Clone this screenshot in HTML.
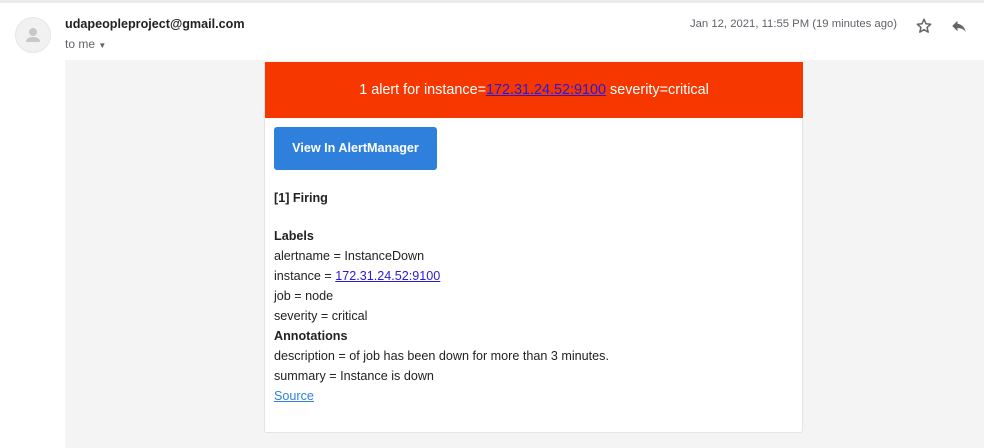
<!DOCTYPE html>
<html><head><style>
body{margin:0;width:984px;height:448px;background:#fff;font-family:"Liberation Sans",Arial,sans-serif;position:relative;overflow:hidden}
.topline{position:absolute;left:0;top:0;width:984px;height:3px;background:#ececec}
.av{position:absolute;left:15px;top:17px;width:36px;height:36px;border-radius:50%;background:#f1f1f1;border:1px solid #e6e6e6;box-sizing:border-box}
.from{position:absolute;left:65px;top:17px;font-size:12.6px;font-weight:bold;color:#222}
.tome{position:absolute;left:65px;top:37px;font-size:12px;color:#5f6368}
.date{position:absolute;left:690px;top:18px;font-size:11.3px;color:#5f6368}
.gray{position:absolute;left:65px;top:60px;width:919px;height:388px;background:#f4f4f4}
.card{position:absolute;left:264px;top:62px;width:539px;height:371px;background:#fff;border:1px solid #e4e4e4;border-top:none;box-sizing:border-box;border-radius:0 0 3px 3px}
.hdr{position:absolute;left:265px;top:62px;width:538px;height:56px;background:#f63700;color:#fff;font-size:14.4px;text-align:center;line-height:56px}
.hdr a{color:#2a19d6;text-decoration:underline}
.btn{position:absolute;left:274px;top:127px;width:163px;height:43px;background:#2f80dd;border-radius:3px;color:#fff;font-weight:bold;font-size:12.6px;text-align:center;line-height:42px}
.t{position:absolute;left:274px;font-size:12.6px;color:#222}
.b{font-weight:bold}
a.l{color:#2a19d6}
</style></head><body>
<div class="topline"></div>
<div class="av"><svg width="34" height="34" viewBox="0 0 34 34"><circle cx="17" cy="14" r="4" fill="#c8c8c8"/><path d="M10 24c0-4 4-5 7-5s7 1 7 5z" fill="#c8c8c8"/></svg></div>
<div class="from">udapeopleproject@gmail.com</div>
<div class="tome">to me <span style="font-size:8px">&#9660;</span></div>
<div class="date">Jan 12, 2021, 11:55 PM (19 minutes ago)</div>
<svg style="position:absolute;left:915px;top:17px" width="18" height="18" viewBox="0 0 24 24"><path d="M12 3l2.6 6 6.4.6-4.9 4.3 1.5 6.3L12 16.9 6.4 20.2l1.5-6.3L3 9.6l6.4-.6z" fill="none" stroke="#666" stroke-width="2" stroke-linejoin="round"/></svg>
<svg style="position:absolute;left:950px;top:17px" width="18" height="18" viewBox="0 0 24 24"><path d="M10 9V5l-7 7 7 7v-4.1c5 0 8.5 1.6 11 5.1-1-5-4-10-11-11z" fill="#666"/></svg>
<div class="gray"></div>
<div class="card"></div>
<div class="hdr">1 alert for instance=<a>172.31.24.52:9100</a> severity=critical</div>
<div class="btn">View In AlertManager</div>
<div class="t b" style="top:191px">[1] Firing</div>
<div class="t b" style="top:229px">Labels</div>
<div class="t" style="top:249px">alertname = InstanceDown</div>
<div class="t" style="top:269px">instance = <a class="l" style="text-decoration:underline">172.31.24.52:9100</a></div>
<div class="t" style="top:289px">job = node</div>
<div class="t" style="top:309px">severity = critical</div>
<div class="t b" style="top:329px">Annotations</div>
<div class="t" style="top:349px">description = of job has been down for more than 3 minutes.</div>
<div class="t" style="top:369px">summary = Instance is down</div>
<div class="t" style="top:389px"><a style="color:#2f80dd;text-decoration:underline">Source</a></div>
</body></html>
